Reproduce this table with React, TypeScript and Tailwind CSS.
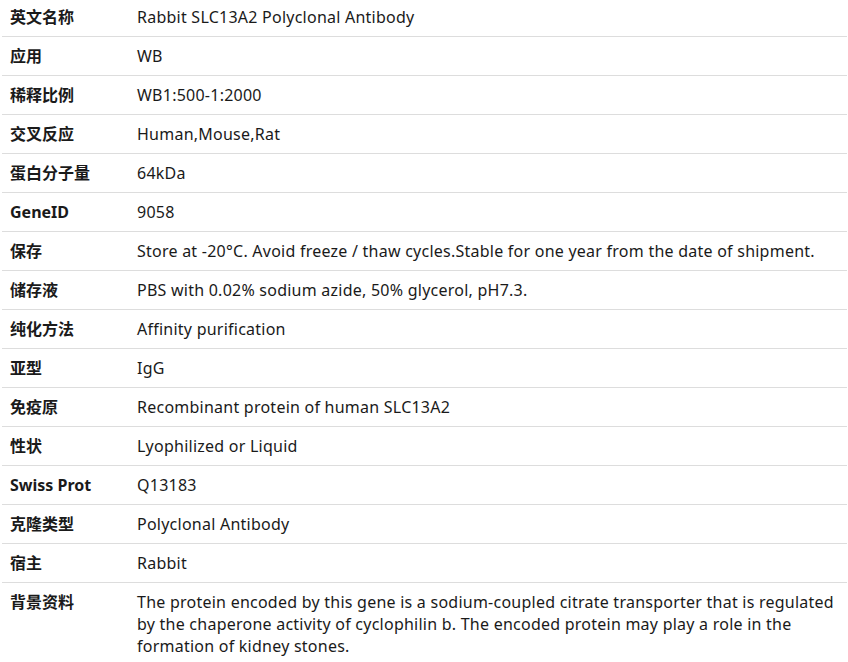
import React from 'react';

const rows: [string, string][] = [
  ['英文名称', 'Rabbit SLC13A2 Polyclonal Antibody'],
  ['应用', 'WB'],
  ['稀释比例', 'WB1:500-1:2000'],
  ['交叉反应', 'Human,Mouse,Rat'],
  ['蛋白分子量', '64kDa'],
  ['GeneID', '9058'],
  ['保存', 'Store at -20°C. Avoid freeze / thaw cycles.Stable for one year from the date of shipment.'],
  ['储存液', 'PBS with 0.02% sodium azide, 50% glycerol, pH7.3.'],
  ['纯化方法', 'Affinity purification'],
  ['亚型', 'IgG'],
  ['免疫原', 'Recombinant protein of human SLC13A2'],
  ['性状', 'Lyophilized or Liquid'],
  ['Swiss Prot', 'Q13183'],
  ['克隆类型', 'Polyclonal Antibody'],
  ['宿主', 'Rabbit'],
  [
    '背景资料',
    'The protein encoded by this gene is a sodium-coupled citrate transporter that is regulated by the chaperone activity of cyclophilin b. The encoded protein may play a role in the formation of kidney stones.',
  ],
];

export default function App() {
  return (
    <div
      className="w-[848px] h-[662px] overflow-hidden bg-white pl-[2px] pr-[1px] text-[16px] leading-[22px] text-[#1a1a1a]"
      style={{ fontFamily: '"Noto Sans", "Noto Sans CJK SC", sans-serif' }}
    >
      <div className="-mt-[2px]">
        {rows.map(([label, value], i) => (
          <div
            key={label}
            className={`flex ${i === 0 ? '' : 'border-t border-[#dddddd]'}`}
          >
            <div className="w-[127px] shrink-0 px-2 py-2 font-bold">{label}</div>
            <div className="flex-1 px-2 py-2 pr-[10px] tracking-[0.24px]">{value}</div>
          </div>
        ))}
      </div>
    </div>
  );
}
